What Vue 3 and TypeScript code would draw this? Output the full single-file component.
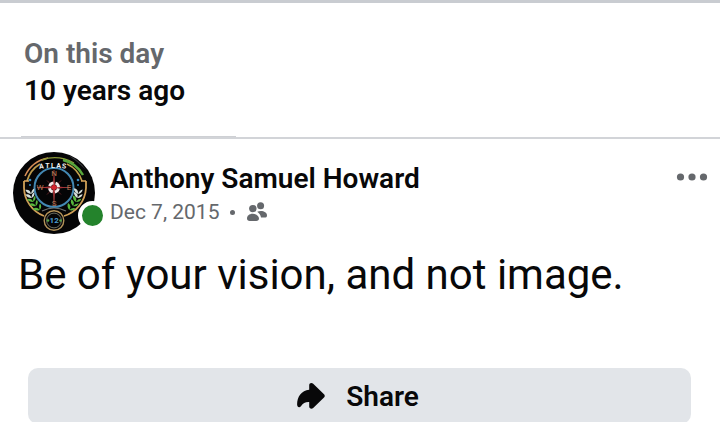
<script setup lang="ts">
interface Memory {
  label: string
  age: string
  author: string
  date: string
  text: string
}

const memory: Memory = {
  label: 'On this day',
  age: '10 years ago',
  author: 'Anthony Samuel Howard',
  date: 'Dec 7, 2015',
  text: 'Be of your vision, and not image.',
}

const leaves: number[] = [0, 1, 2, 3, 4]
</script>

<template>
  <main class="page">
    <header class="intro">
      <p class="intro-label">{{ memory.label }}</p>
      <h1 class="intro-age">{{ memory.age }}</h1>
      <div class="intro-rule"></div>
    </header>

    <article class="post">
      <div class="post-head">
        <div class="avatar">
          <svg class="avatar-art" viewBox="0 0 82 82" aria-hidden="true">
            <circle cx="41" cy="41" r="41" fill="#050506" />
            <path d="M55 3A41 41 0 0 1 73 18Q65 10 55 3Z" fill="#34363a" />
            <g fill="none">
              <path d="M14 29A29 29 0 0 1 27 12" stroke="#bd9a4c" stroke-width="1.8" />
              <path d="M12 24A32 32 0 0 1 35 6" stroke="#d78f58" stroke-width="1.6" />
              <path d="M29 8Q45 2 61 11" stroke="#8c9a3a" stroke-width="1.4" />
              <path d="M50 8Q63 11 70 23" stroke="#58a83c" stroke-width="2.4" />
              <path d="M54 12Q65 17 69 29" stroke="#c3a24e" stroke-width="1.6" />
              <path d="M11 29V36A31 31 0 0 0 31 64M73 29V36A31 31 0 0 1 51 64" stroke="#cfa057" stroke-width="1.8" />
              <path d="M11 29H16M68 29H73" stroke="#dba75c" stroke-width="1.6" />
              <circle cx="41" cy="35.5" r="19.5" stroke="#4388b3" stroke-width="2" />
              <circle cx="41" cy="68.5" r="9.8" stroke="#b3935a" stroke-width="1.4" />
              <circle cx="41" cy="68.5" r="7.4" stroke="#75786a" stroke-width="0.9" />
              <path d="M29 59Q35 56 41 56T53 59" stroke="#70726e" stroke-width="1.2" />
              <path d="M24 35.5H58M41 18V54" stroke="#8f3a36" stroke-width="1" />
              <path d="M34 28.5L48 42.5M48 28.5L34 42.5" stroke="#682428" stroke-width="0.9" />
            </g>
            <path d="M41 22L42.2 34L54 35.5L42.2 37L41 50L39.8 37L28 35.5L39.8 34Z" fill="#a93237" />
            <circle cx="41" cy="35.5" r="4.6" fill="none" stroke="#f6e8e8" stroke-width="2.8" stroke-dasharray="5 2.2" stroke-dashoffset="-1.1" />
            <circle cx="41" cy="35.5" r="2.4" fill="#d5232e" />
            <g v-for="n in leaves" :key="n">
              <path
                d="M0 0Q-4-1-5-5Q0-5 0 0Q1-4 4-5Q4-1 0 0Z"
                :fill="n < 2 ? '#d5dfda' : '#58b63d'"
                :transform="`translate(${18 + n * n * 0.55} ${42 + n * 4}) rotate(${-8 - n * 7})`"
              />
              <path
                d="M0 0Q-4-1-5-5Q0-5 0 0Q1-4 4-5Q4-1 0 0Z"
                :fill="n < 2 ? '#d5dfda' : '#58b63d'"
                :transform="`translate(${65 - n * n * 0.55} ${42 + n * 4}) rotate(${8 + n * 7})`"
              />
            </g>
            <circle cx="17" cy="28" r="1.3" fill="#3a8fc4" />
            <circle cx="17" cy="33" r="1" fill="#3a8fc4" />
            <circle cx="65" cy="28" r="1.3" fill="#3a8fc4" />
            <circle cx="65" cy="33" r="1" fill="#3a8fc4" />
            <g class="art-text">
              <text x="28.5" y="16.5" transform="rotate(-5 28 16)">A</text>
              <text x="34.5" y="16">T</text>
              <text x="40" y="16">L</text>
              <text x="45.5" y="16">A</text>
              <text x="51" y="16.5" transform="rotate(5 51 16)">S</text>
            </g>
            <g class="art-points">
              <text x="41" y="23.5">N</text>
              <text x="41" y="54">S</text>
              <text x="27" y="38">W</text>
              <text x="56" y="38">E</text>
            </g>
            <text class="art-number" x="41.2" y="71">12</text>
            <circle cx="35" cy="68.5" r="1.3" fill="#55a748" />
            <circle cx="47.5" cy="68.5" r="1.3" fill="#55a748" />
          </svg>
          <span class="online" role="img" aria-label="Active"></span>
        </div>

        <div class="byline">
          <h2 class="author">{{ memory.author }}</h2>
          <p class="meta">
            <span>{{ memory.date }}</span>
            <span class="separator"></span>
            <svg class="friends" viewBox="0 0 22 20" role="img" aria-label="Friends">
              <circle cx="6.8" cy="6.6" r="3.7" />
              <circle cx="14.6" cy="3.8" r="3.5" />
              <path d="M6.8 11.8C3 11.8 1 14 1 16.5C1 18.1 2 19 3.7 19H10.2C12 19 13 18.1 13 16.5C13 14 10.6 11.8 6.8 11.8Z" />
              <path d="M11.2 9.8C15.5 8 21 9.7 21 13.4C21 14.9 20 15.6 18.5 15.6H15C14.6 13 13.4 11.2 11.2 9.8Z" />
            </svg>
          </p>
        </div>

        <button class="more" type="button" aria-label="More options">
          <svg viewBox="0 0 32 8" aria-hidden="true">
            <circle cx="4.5" cy="4" r="3.6" />
            <circle cx="16" cy="4" r="3.6" />
            <circle cx="27.5" cy="4" r="3.6" />
          </svg>
        </button>
      </div>

      <p class="message">{{ memory.text }}</p>

      <button class="share" type="button">
        <svg viewBox="0 0 30 28" aria-hidden="true">
          <path d="M13.2 3.2C13.2 .9 15.7 .2 17.2 1.7L28 12.2C29 13.2 29 14.5 28 15.5L17.2 26C15.6 27.5 13.2 26.7 13.2 24.6V20.1C9.4 19.9 7 21.2 5.1 24C3.5 26.3 1.1 25.3 1.1 22.6C1.1 14.3 5.5 8.5 13.2 7.7Z" />
        </svg>
        <span>Share</span>
      </button>
    </article>
  </main>
</template>

<style>
body {
  background: #fff;
  overflow: hidden;
}
</style>

<style scoped>
.page {
  border-top: 3px solid #c9ccd1;
  color: #080809;
  font-family: Roboto, "Liberation Sans", sans-serif;
}

p,
h1,
h2 {
  margin: 0;
}

.intro {
  padding: 32px 21px 0;
  border-bottom: 2px solid #d2d4d8;
}

.intro-label,
.intro-age {
  padding-left: 3px;
  font-size: 28px;
  font-weight: 600;
  line-height: 37px;
}

.intro-label {
  color: #65686c;
}

.intro-rule {
  width: 215px;
  height: 1px;
  margin-top: 27px;
  background: #ced0d4;
}

.post {
  padding-top: 13px;
}

.post-head {
  display: flex;
  align-items: flex-start;
  gap: 15px;
  padding: 0 8px 0 13px;
}

.avatar {
  position: relative;
  flex: none;
  width: 82px;
  height: 82px;
}

.avatar-art {
  display: block;
  width: 100%;
  height: 100%;
}

.art-text {
  fill: #f1f1f1;
  font-size: 7px;
  font-weight: 700;
  text-anchor: middle;
}

.art-points {
  fill: #b77957;
  font-size: 8px;
  text-anchor: middle;
}

.art-number {
  fill: #4c9fd2;
  font-size: 8px;
  font-weight: 700;
  text-anchor: middle;
}

.online {
  position: absolute;
  right: -12px;
  bottom: 4px;
  width: 21px;
  height: 21px;
  border: 4px solid #fff;
  border-radius: 50%;
  background: #24832c;
}

.byline {
  flex: 1;
  padding-top: 10px;
}

.author {
  font-size: 28px;
  font-weight: 600;
  line-height: 34px;
}

.meta {
  display: flex;
  align-items: center;
  gap: 11px;
  color: #65686c;
  font-size: 21px;
  line-height: 32px;
}

.separator {
  width: 5px;
  height: 5px;
  border-radius: 50%;
  background: #65686c;
}

.friends {
  width: 22px;
  height: 20px;
  fill: #65686c;
}

.more {
  padding: 21px 4px;
  border: 0;
  background: none;
}

.more svg {
  display: block;
  width: 32px;
  height: 8px;
  fill: #65686c;
}

.message {
  padding: 13px 18px 0;
  font-size: 42px;
  line-height: 56px;
}

.share {
  display: flex;
  align-items: center;
  justify-content: center;
  gap: 20px;
  width: calc(100% - 57px);
  height: 56px;
  margin: 65px 29px 0 28px;
  padding: 0 4px 0 0;
  border: 0;
  border-radius: 10px;
  background: #e2e5e9;
  color: #080809;
  font-family: inherit;
  font-size: 28px;
  font-weight: 600;
}

.share svg {
  width: 30px;
  height: 28px;
  fill: #080809;
}
</style>
